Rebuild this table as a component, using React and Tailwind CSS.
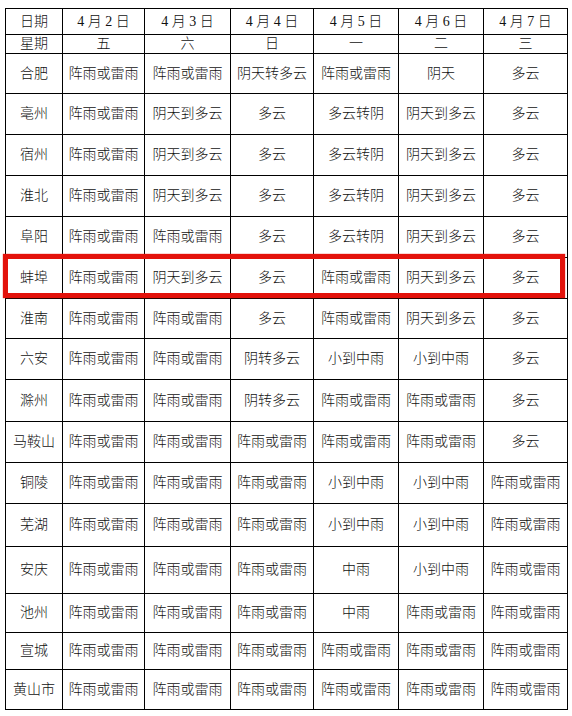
const DATES = ['4 月 2 日', '4 月 3 日', '4 月 4 日', '4 月 5 日', '4 月 6 日', '4 月 7 日'];
const WEEK = ['五', '六', '日', '一', '二', '三'];
const COLS = [57, 82, 86, 83, 85, 85, 84];

const R = '阵雨或雷雨';
const ROWS = [
  ['合肥', [R, R, '阴天转多云', R, '阴天', '多云'], 40],
  ['亳州', [R, '阴天到多云', '多云', '多云转阴', '阴天到多云', '多云'], 41],
  ['宿州', [R, '阴天到多云', '多云', '多云转阴', '阴天到多云', '多云'], 41],
  ['淮北', [R, '阴天到多云', '多云', '多云转阴', '阴天到多云', '多云'], 41],
  ['阜阳', [R, R, '多云', '多云转阴', '阴天到多云', '多云'], 41],
  ['蚌埠', [R, '阴天到多云', '多云', R, '阴天到多云', '多云'], 41],
  ['淮南', [R, R, '多云', R, '阴天到多云', '多云'], 40],
  ['六安', [R, R, '阴转多云', '小到中雨', '小到中雨', '多云'], 41],
  ['滁州', [R, R, '阴转多云', R, R, '多云'], 42],
  ['马鞍山', [R, R, R, R, R, '多云'], 41],
  ['铜陵', [R, R, R, '小到中雨', '小到中雨', R], 41],
  ['芜湖', [R, R, R, '小到中雨', '小到中雨', R], 43],
  ['安庆', [R, R, R, '中雨', '小到中雨', R], 47],
  ['池州', [R, R, R, '中雨', R, R], 39],
  ['宣城', [R, R, R, R, R, R], 37],
  ['黄山市', [R, R, R, R, R, R], 40],
];

const cell = 'border border-black text-center align-middle p-0 whitespace-nowrap';

export default function App() {
  return (
    <div
      className="relative w-[572px] h-[716px] bg-white text-[#111] pt-[8px] pl-[5px]"
      style={{ fontFamily: '"Liberation Serif", "Noto Sans CJK SC", sans-serif' }}
    >
      <table className="table-fixed border-collapse w-[563px] text-[14px] leading-none font-light">
        <colgroup>
          {COLS.map((w, i) => (
            <col key={i} style={{ width: w }} />
          ))}
        </colgroup>
        <tbody>
          <tr className="h-[26px]">
            <td className={cell}>日期</td>
            {DATES.map(d => (
              <td key={d} className={cell}>{d}</td>
            ))}
          </tr>
          <tr className="h-[19px]">
            <td className={cell}>星期</td>
            {WEEK.map(w => (
              <td key={w} className={cell}>{w}</td>
            ))}
          </tr>
          {ROWS.map(([city, days, h]) => (
            <tr key={city} style={{ height: h }}>
              <td className={cell}>{city}</td>
              {days.map((d, i) => (
                <td key={i} className={cell}>{d}</td>
              ))}
            </tr>
          ))}
        </tbody>
      </table>

      {/* highlight around 蚌埠 */}
      <div className="absolute left-[3px] top-[254px] w-[562px] h-[44px] border-[5px] border-[#e3120b] shadow-[0_0_1px_#e3120b] pointer-events-none" />
    </div>
  );
}
